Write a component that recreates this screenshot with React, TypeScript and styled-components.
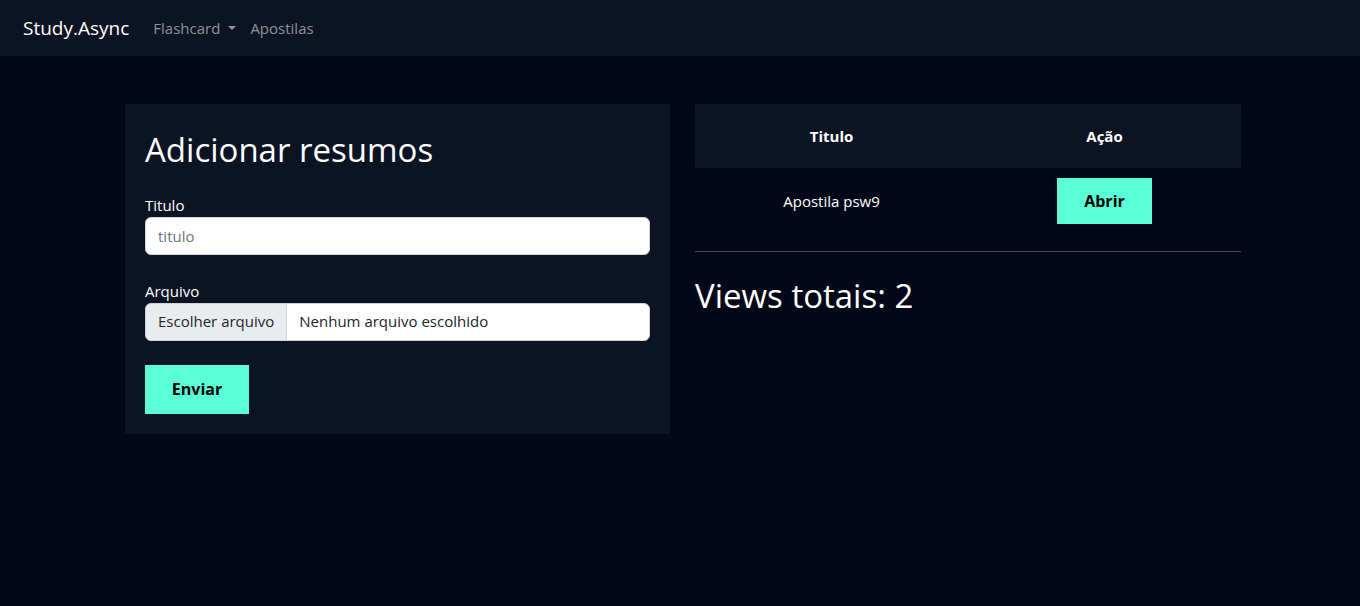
import React from 'react';
import styled, { createGlobalStyle } from 'styled-components';

const GlobalStyle = createGlobalStyle`
  * { box-sizing: border-box; }
  body {
    margin: 0;
    background: #020817;
    color: #fff;
    font-family: "Open Sans", "Noto Sans", sans-serif;
    font-size: 16px;
    line-height: 1.5;
  }
`;

const Navbar = styled.nav`
  height: 56px;
  background: #0c1322;
  display: flex;
  align-items: center;
  padding: 0 23px;
`;

const Brand = styled.a`
  font-size: 19px;
  color: #fff;
  margin-right: 24px;
  text-decoration: none;
`;

const NavLink = styled.a`
  color: rgba(255, 255, 255, 0.55);
  font-size: 15px;
  text-decoration: none;
  display: flex;
  align-items: center;
  margin-right: 14px;
`;

const Caret = styled.span`
  display: inline-block;
  margin-left: 8px;
  border-top: 4.5px solid rgba(255, 255, 255, 0.55);
  border-left: 4.5px solid transparent;
  border-right: 4.5px solid transparent;
`;

const Main = styled.main`
  display: grid;
  grid-template-columns: 545px 546px;
  gap: 25px;
  padding: 48px 0 0 125px;
  align-items: start;
`;

const Card = styled.section`
  background: #0c1322;
  padding: 20px;
`;

const Title = styled.h2`
  margin: 6px 0 24px;
  font-size: 33px;
  font-weight: 400;
  line-height: 1.2;
`;

const Label = styled.label`
  display: block;
  font-size: 15px;
  line-height: 22px;
  margin-bottom: 1px;
`;

const Field = styled.div<{ $gap: number }>`
  margin-bottom: ${(p) => p.$gap}px;
`;

const TextInput = styled.input`
  width: 100%;
  height: 38px;
  border: 1px solid #ced4da;
  border-radius: 6px;
  padding: 0 12px;
  font-family: inherit;
  font-size: 15px;
  color: #212529;
  &::placeholder { color: #6c757d; }
`;

const FileBox = styled.div`
  display: flex;
  height: 38px;
  background: #fff;
  border: 1px solid #ced4da;
  border-radius: 6px;
  overflow: hidden;
  font-size: 15px;
  color: #212529;
`;

const FileButton = styled.span`
  background: #e9ecef;
  border-right: 1px solid #ced4da;
  padding: 0 12px;
  display: flex;
  align-items: center;
`;

const FileName = styled.span`
  padding: 0 12px;
  display: flex;
  align-items: center;
`;

const AccentButton = styled.button<{ $w: number; $h: number }>`
  width: ${(p) => p.$w}px;
  height: ${(p) => p.$h}px;
  background: #5affd5;
  border: none;
  border-radius: 0;
  font-family: inherit;
  font-weight: 700;
  font-size: 16px;
  color: #000;
`;

const Table = styled.table`
  width: 100%;
  border-collapse: collapse;
`;

const Th = styled.th`
  background: #0c1322;
  height: 64px;
  font-size: 15px;
  font-weight: 700;
  width: 50%;
`;

const Td = styled.td`
  text-align: center;
  font-size: 15px;
  padding: 10px 0 27px;
`;

const Divider = styled.hr`
  border: none;
  border-top: 1px solid #474d5a;
  margin: 0 0 24px;
`;

const Views = styled.h2`
  margin: 0;
  font-size: 33px;
  font-weight: 400;
  line-height: 1.2;
`;

export default function App() {
  return (
    <>
      <GlobalStyle />
      <Navbar>
        <Brand>Study.Async</Brand>
        <NavLink>
          Flashcard <Caret />
        </NavLink>
        <NavLink>Apostilas</NavLink>
      </Navbar>
      <Main>
        <Card>
          <Title>Adicionar resumos</Title>
          <Field $gap={25}>
            <Label>Titulo</Label>
            <TextInput placeholder="titulo" />
          </Field>
          <Field $gap={24}>
            <Label>Arquivo</Label>
            <FileBox>
              <FileButton>Escolher arquivo</FileButton>
              <FileName>Nenhum arquivo escolhido</FileName>
            </FileBox>
          </Field>
          <AccentButton $w={104} $h={49}>Enviar</AccentButton>
        </Card>
        <div>
          <Table>
            <thead>
              <tr>
                <Th>Titulo</Th>
                <Th>Ação</Th>
              </tr>
            </thead>
            <tbody>
              <tr>
                <Td>Apostila psw9</Td>
                <Td>
                  <AccentButton $w={95} $h={46}>Abrir</AccentButton>
                </Td>
              </tr>
            </tbody>
          </Table>
          <Divider />
          <Views>Views totais: 2</Views>
        </div>
      </Main>
    </>
  );
}
